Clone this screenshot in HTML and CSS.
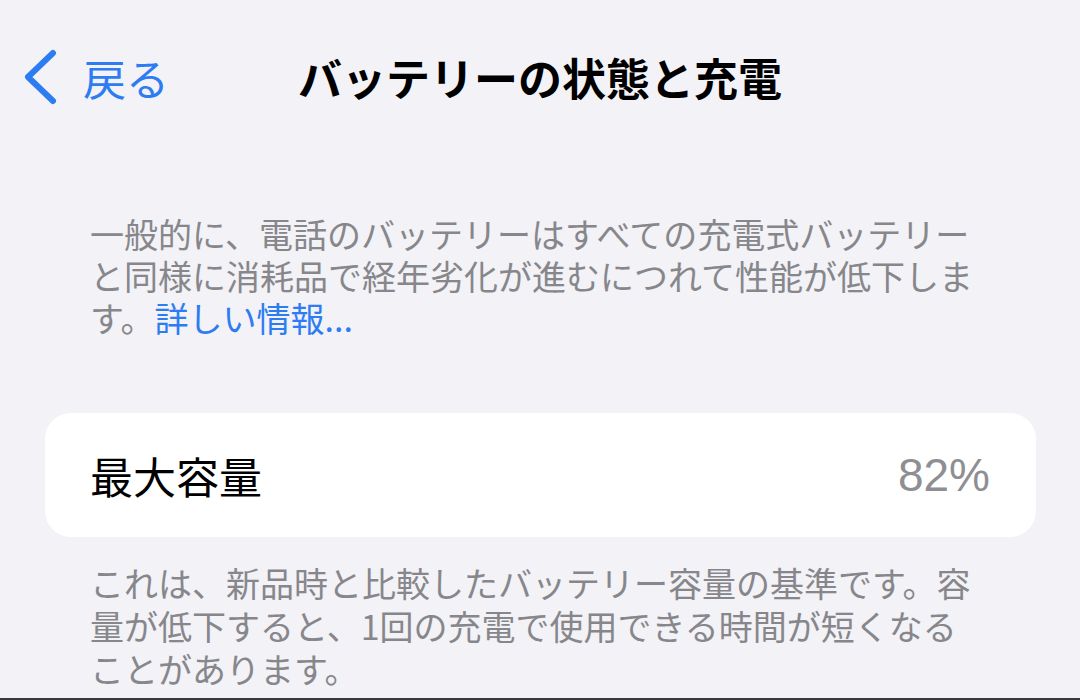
FILE: index.html
```html
<!DOCTYPE html>
<html lang="ja">
<head>
<meta charset="utf-8">
<title>バッテリーの状態と充電</title>
<link rel="stylesheet" href="styles.css">
</head>
<body>

<div class="screen">
  <!-- Navigation bar -->
  <div class="nav">
    <a class="back" href="#">
      <svg class="chevron" width="36" height="56" viewBox="0 0 36 56">
        <polyline points="30,4 5,28 30,52" fill="none" stroke="currentColor" stroke-width="6" stroke-linecap="round" stroke-linejoin="round"/>
      </svg>
      <span>戻る</span>
    </a>
    <div class="title">バッテリーの状態と充電</div>
    <div></div>
  </div>

  <p class="note intro"><span>一般的に、電話のバッテリーはすべての充電式バッテリーと同様に消耗品で経年劣化が進むにつれて性能が低下します。</span><a class="link" href="#">詳しい情報...</a></p>

  <div class="card">
    <div class="row">
      <span class="label">最大容量</span>
      <span class="value">82%</span>
    </div>
  </div>

  <p class="note footer">これは、新品時と比較したバッテリー容量の基準です。容量が低下すると、1回の充電で使用できる時間が短くなることがあります。</p>
</div>

</body>
</html>
```

FILE: styles.css
```css
body {
  margin: 0;
  font-family: "Liberation Sans", "Noto Sans CJK JP", sans-serif;
  background-color: #f2f2f7;
}

.screen {
  height: 700px;
  box-sizing: border-box;
  border-bottom: 2px solid #3a3a3c;
  overflow: hidden;
  background-color: #f2f2f7;
}

/* Top bar */
.nav {
  display: grid;
  grid-template-columns: 1fr auto 1fr;
  align-items: center;
  height: 154px;
}

.back {
  display: flex;
  align-items: center;
  gap: 24px;
  padding-left: 23px;
  color: #2d7cf2;
  text-decoration: none;
  font-family: "Noto Sans CJK JP", sans-serif;
  font-size: 43px;
}

.chevron {
  display: block;
}

.title {
  font-family: "Noto Sans CJK JP", sans-serif;
  font-size: 44px;
  font-weight: 700;
  color: #000;
}

/* Grey explanatory text */
.note {
  width: 900px;
  margin: 0;
  padding-left: 90px;
  font-family: "Noto Sans CJK JP", sans-serif;
  font-size: 34px;
  line-height: 42px;
  color: #87878b;
}

.intro {
  margin-top: 59px;
}

.link {
  color: #2d7cf2;
  text-decoration: none;
}

.card {
  margin: 74px 44px 0 45px;
  height: 124px;
  background-color: #fff;
  border-radius: 26px;
}

.row {
  display: flex;
  justify-content: space-between;
  align-items: center;
  height: 100%;
  padding: 0 46px 0 45px;
}

.label {
  font-family: "Noto Sans CJK JP", sans-serif;
  font-size: 43px;
  color: #000;
}

.value {
  font-family: "Liberation Sans", sans-serif;
  font-size: 46px;
  color: #8e8e93;
}

.footer {
  margin-top: 24px;
  line-height: 43px;
}
```
